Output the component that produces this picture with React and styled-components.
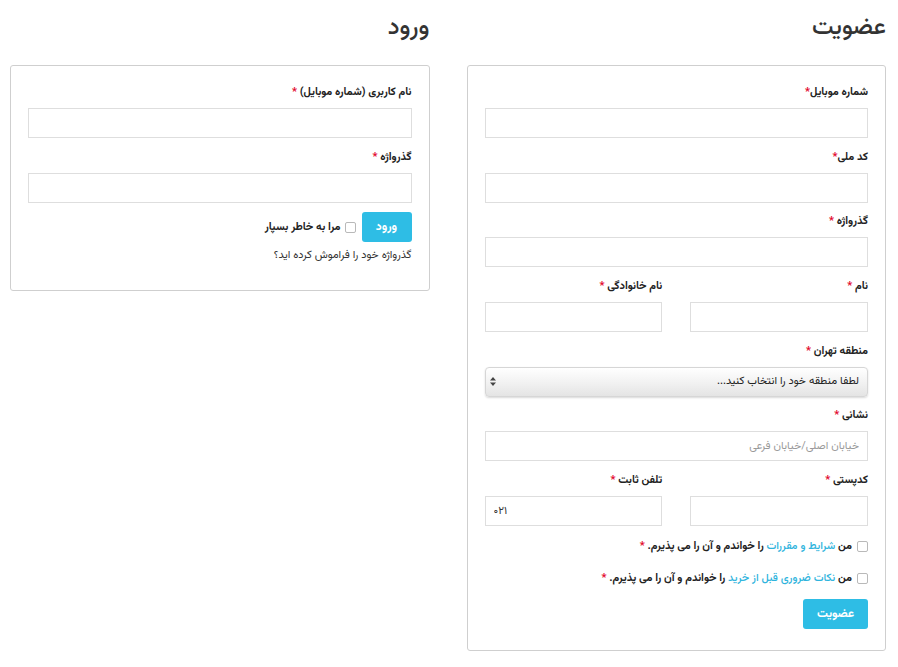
import React from "react";
import styled, { createGlobalStyle } from "styled-components";

const Global = createGlobalStyle`
  html, body { margin: 0; padding: 0; background: #fff; }
  body { font-family: "Vazirmatn", "DejaVu Sans", sans-serif; color: #333; }
  * { box-sizing: border-box; }
`;

const Page = styled.div`
  direction: rtl;
  display: grid;
  grid-template-columns: 1fr 1fr;
  column-gap: 37px;
  padding: 0 12px 0 10px;
  align-items: start;
`;

const Column = styled.section`
  display: flex;
  flex-direction: column;
`;

const Title = styled.h2`
  margin: 0;
  height: 65px;
  padding-top: 12px;
  font-size: 24px;
  font-weight: 500;
  line-height: 32px;
  color: #333;
`;

const Panel = styled.div`
  border: 1px solid #cfcfcf;
  border-radius: 3px;
  padding: 16px 17px ${(p) => p.$bottom || 21}px;
  display: flex;
  flex-direction: column;
  gap: 8.7px;
`;

const Group = styled.div`
  display: flex;
  flex-direction: column;
`;

const Row = styled.div`
  display: grid;
  grid-template-columns: 1fr 1fr;
  column-gap: 28px;
`;

const Label = styled.label`
  font-size: 11px;
  font-weight: bold;
  line-height: 17px;
  padding-top: 2px;
  margin-bottom: 7px;
  color: #222;
`;

const Star = styled.span`
  color: #e2062c;
`;

const Input = styled.input`
  height: 30px;
  width: 100%;
  border: 1px solid #dedede;
  border-radius: 0;
  padding: 0 8px;
  font-family: inherit;
  font-size: 11px;
  color: #333;
  direction: ${(p) => (p.$ltr ? "ltr" : "rtl")};
  outline: none;
  &::placeholder { color: #999; }
`;

const SelectBox = styled.div`
  height: 30px;
  border-radius: 4px;
  border: 1px solid #d6d6d6;
  background: linear-gradient(#ffffff, #f1f1f1 55%, #e4e4e4);
  box-shadow: 0 1px 2px rgba(0,0,0,0.15);
  display: flex;
  align-items: center;
  justify-content: space-between;
  padding: 0 8px 0 4px;
  font-size: 11px;
  color: #222;
`;

const Arrows = styled.svg`
  width: 6px;
  height: 9px;
`;

const CheckRow = styled.div`
  display: flex;
  align-items: center;
  gap: 5px;
  height: 23px;
  font-size: 11px;
  font-weight: bold;
  color: #222;
`;

const Check = styled.input.attrs({ type: "checkbox" })`
  appearance: none;
  width: 11px;
  height: 11px;
  margin: 0;
  border: 1px solid #b9b9b9;
  border-radius: 2px;
  background: #fff;
  flex: none;
`;

const Link = styled.a`
  color: #2fb4dd;
  font-weight: 500;
  text-decoration: none;
`;

const Button = styled.button`
  width: ${(p) => p.$w}px;
  height: 30px;
  border: none;
  border-radius: 3px;
  background: #2ebde5;
  color: #fff;
  font-family: inherit;
  font-size: 12px;
  font-weight: bold;
  flex: none;
`;

const Actions = styled.div`
  display: flex;
  align-items: center;
  gap: 6px;
  margin-top: ${(p) => p.$mt || 0}px;
`;

const Remember = styled.label`
  display: flex;
  align-items: center;
  gap: 4px;
  font-size: 11px;
  font-weight: bold;
  color: #222;
`;

const Forgot = styled.div`
  font-size: 11px;
  line-height: 17px;
  color: #333;
  margin-top: -4px;
`;

const Field = ({ label, tight, ...rest }) => (
  <Group>
    <Label>
      {label}
      {tight ? "" : " "}
      <Star>*</Star>
    </Label>
    <Input {...rest} />
  </Group>
);

export default function App() {
  return (
    <>
      <Global />
      <Page>
        <Column>
          <Title>عضویت</Title>
          <Panel $bottom={21}>
            <Field label="شماره موبایل" tight />
            <Field label="کد ملی" tight />
            <Field label="گذرواژه" type="password" />
            <Row>
              <Field label="نام" />
              <Field label="نام خانوادگی" />
            </Row>
            <Group>
              <Label>
                منطقه تهران <Star>*</Star>
              </Label>
              <SelectBox>
                <span>لطفا منطقه خود را انتخاب کنید...</span>
                <Arrows viewBox="0 0 6 9">
                  <path d="M3 0 L6 3.5 H0 Z M3 9 L6 5.5 H0 Z" fill="#444" />
                </Arrows>
              </SelectBox>
            </Group>
            <Field label="نشانی" placeholder="خیابان اصلی/خیابان فرعی" />
            <Row>
              <Field label="کدپستی" />
              <Field label="تلفن ثابت" defaultValue="۰۲۱" $ltr />
            </Row>
            <CheckRow>
              <Check />
              <span>
                من <Link href="#">شرایط و مقررات</Link> را خواندم و آن را می پذیرم.{" "}
                <Star>*</Star>
              </span>
            </CheckRow>
            <CheckRow>
              <Check />
              <span>
                من <Link href="#">نکات ضروری قبل از خرید</Link> را خواندم و آن را می پذیرم.{" "}
                <Star>*</Star>
              </span>
            </CheckRow>
            <Actions $mt={1}>
              <Button $w={65}>عضویت</Button>
            </Actions>
          </Panel>
        </Column>
        <Column>
          <Title>ورود</Title>
          <Panel $bottom={26}>
            <Field label="نام کاربری (شماره موبایل)" />
            <Field label="گذرواژه" type="password" />
            <Actions $mt={1}>
              <Button $w={50}>ورود</Button>
              <Remember>
                <Check />
                مرا به خاطر بسپار
              </Remember>
            </Actions>
            <Forgot>گذرواژه خود را فراموش کرده اید؟</Forgot>
          </Panel>
        </Column>
      </Page>
    </>
  );
}
